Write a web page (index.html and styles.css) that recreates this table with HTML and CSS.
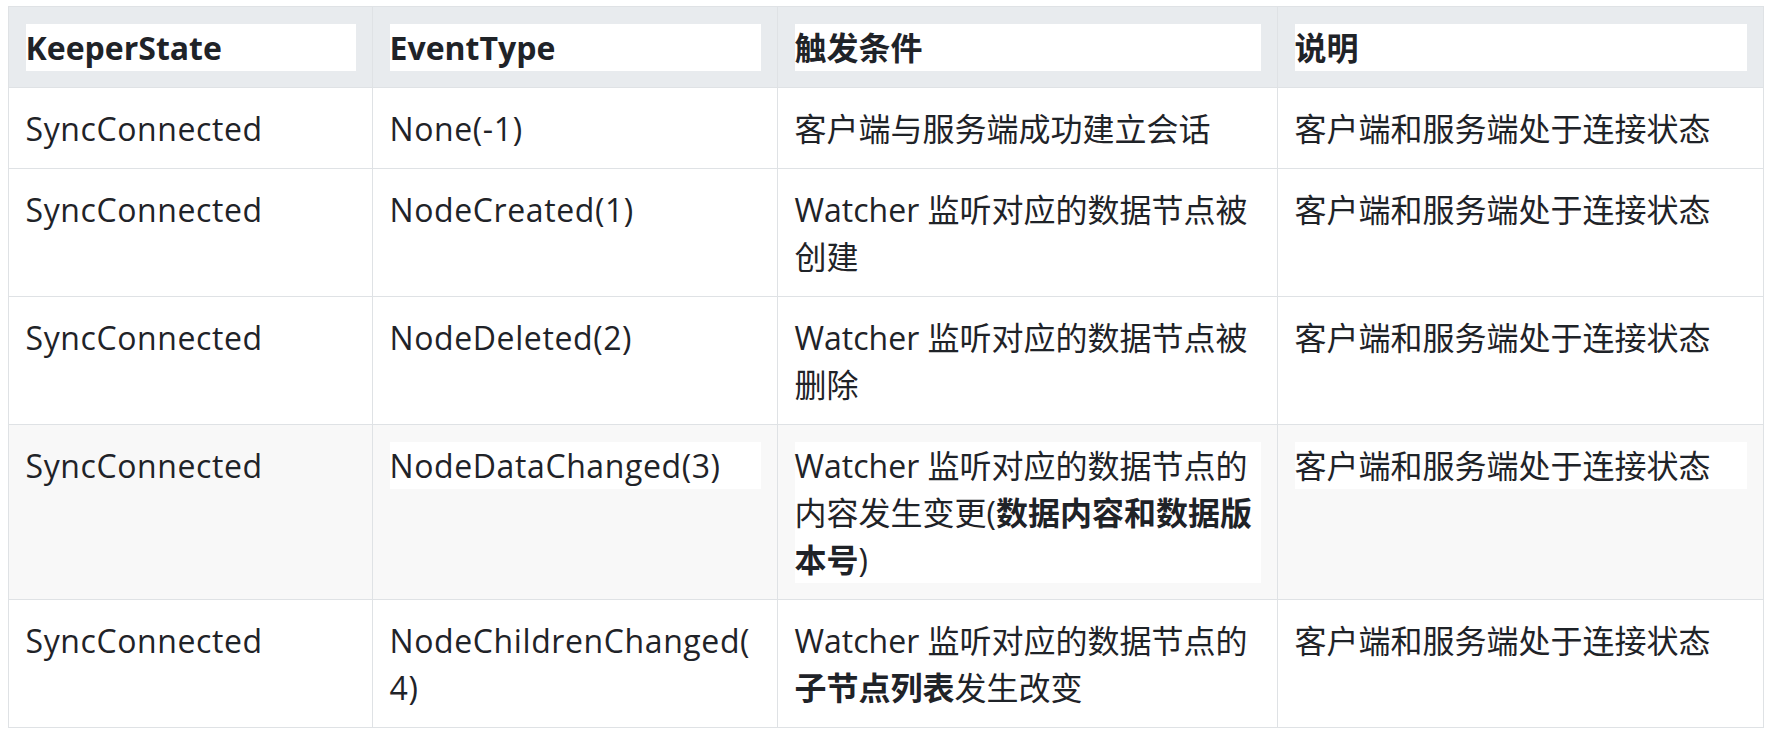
FILE: index.html
```html
<!DOCTYPE html>
<html lang="zh-CN">
<head>
<meta charset="utf-8">
<title>Watcher 事件类型</title>
<link rel="stylesheet" href="styles.css">
</head>
<body>
<div class="page">
  <table class="events">
    <colgroup>
      <col class="c1"><col class="c2"><col class="c3"><col class="c4">
    </colgroup>
    <thead>
      <tr>
        <th><div class="hl">KeeperState</div></th>
        <th><div class="hl">EventType</div></th>
        <th><div class="hl">触发条件</div></th>
        <th><div class="hl">说明</div></th>
      </tr>
    </thead>
    <tbody>
      <tr>
        <td class="latin">SyncConnected</td>
        <td class="latin">None(-1)</td>
        <td>客户端与服务端成功建立会话</td>
        <td>客户端和服务端处于连接状态</td>
      </tr>
      <tr>
        <td class="latin">SyncConnected</td>
        <td class="latin">NodeCreated(1)</td>
        <td>Watcher 监听对应的数据节点被创建</td>
        <td>客户端和服务端处于连接状态</td>
      </tr>
      <tr>
        <td class="latin">SyncConnected</td>
        <td class="latin">NodeDeleted(2)</td>
        <td>Watcher 监听对应的数据节点被删除</td>
        <td>客户端和服务端处于连接状态</td>
      </tr>
      <tr class="hover">
        <td class="latin">SyncConnected</td>
        <td class="latin"><div class="hl">NodeDataChanged(3)</div></td>
        <td><div class="hl">Watcher 监听对应的数据节点的内容发生变更(<strong>数据内容和数据版本号</strong>)</div></td>
        <td><div class="hl">客户端和服务端处于连接状态</div></td>
      </tr>
      <tr>
        <td class="latin">SyncConnected</td>
        <td class="latin">NodeChildrenChanged(<wbr>4)</td>
        <td>Watcher 监听对应的数据节点的<strong>子节点列表</strong>发生改变</td>
        <td>客户端和服务端处于连接状态</td>
      </tr>
    </tbody>
  </table>
</div>
</body>
</html>
```

FILE: styles.css
```css
html, body {
  margin: 0;
  padding: 0;
  background: #ffffff;
}

.page {
  padding: 6px 0 0 8px;
}

.events {
  border-collapse: collapse;
  table-layout: fixed;
  width: 1755px;
  font-family: "Open Sans", "Noto Sans CJK SC", sans-serif;
  font-size: 32px;
  line-height: 47px;
  color: #1f2328;
}

.c1 { width: 364px; }
.c2 { width: 405px; }
.c3 { width: 500px; }
.c4 { width: 486px; }

.events th,
.events td {
  border: 1px solid #dfe2e5;
  padding: 16.5px 16px 16.5px 16.5px;
  text-align: left;
  vertical-align: top;
}

.events td.latin {
  letter-spacing: 0.6px;
}

.events thead tr {
  background: #e8ebee;
}

.events th {
  font-weight: 700;
}

.events tr.hover {
  background: #f8f8f8;
}

.events strong {
  font-weight: 700;
}

.hl {
  background: #ffffff;
}
```
